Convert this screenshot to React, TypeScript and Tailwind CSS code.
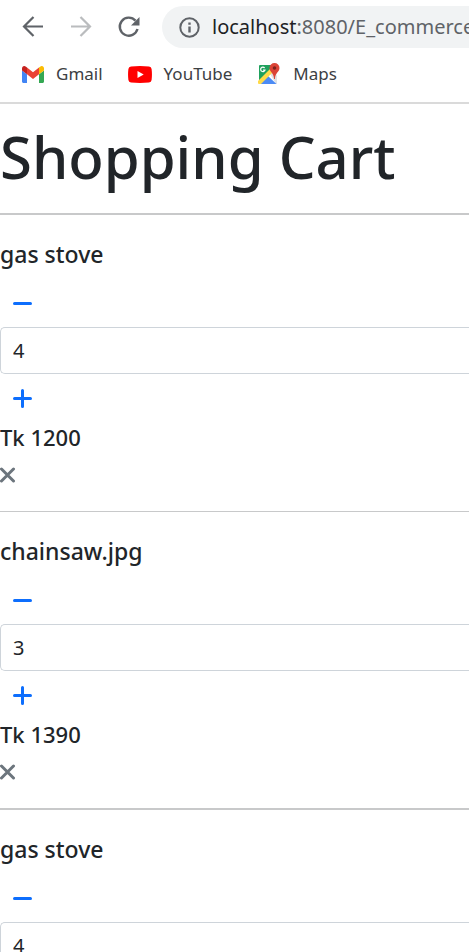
import React from "react";

type CartItem = { id: number; name: string; quantity: number; price: number; divider: string };

const items: CartItem[] = [
  { id: 1, name: "gas stove", quantity: 4, price: 1200, divider: "border-t-2" },
  { id: 2, name: "chainsaw.jpg", quantity: 3, price: 1390, divider: "border-t" },
  { id: 3, name: "gas stove", quantity: 4, price: 1200, divider: "border-t-2" },
];

function GmailIcon() {
  return (
    <svg width="22" height="17" viewBox="52 42 88 66" preserveAspectRatio="none" aria-hidden="true">
      <path fill="#4285f4" d="M58 108h14V74L52 59v43c0 3.32 2.69 6 6 6" />
      <path fill="#34a853" d="M120 108h14c3.32 0 6-2.69 6-6V59l-20 15" />
      <path fill="#fbbc04" d="M120 48v26l20-15v-8c0-7.42-8.47-11.65-14.4-7.2" />
      <path fill="#ea4335" d="M72 74V48l24 18 24-18v26L96 92" />
      <path fill="#c5221f" d="M52 51v8l20 15V48l-5.6-4.2c-5.94-4.45-14.4-.22-14.4 7.2" />
    </svg>
  );
}

function YouTubeIcon() {
  return (
    <svg width="24" height="17" viewBox="0 0 24 17" aria-hidden="true">
      <path fill="#f00" d="M3 .5Q12-.5 21 .5Q23.300.7 23.600 3Q24.300 8.500 23.600 14Q23.300 16.300 21 16.500Q12 17.400 3 16.500Q.7 16.300.4 14Q-.3 8.500.4 3Q.7.7 3 .5" />
      <path fill="#fff" d="M9.500 5v7l6.200-3.500z" />
    </svg>
  );
}

function MapsIcon() {
  return (
    <svg width="24" height="24" viewBox="0 0 24 24" aria-hidden="true">
      <path fill="#1fa15d" d="M3 3h16L2 20V4q0-1 1-1" />
      <path fill="#dfe2e5" d="M13 12l4-4 3 6v7q0 1-1 1z" />
      <path fill="#4c8bf5" d="M3 22L11 14l8.500 8z" />
      <path fill="#ffda48" d="M1 19L14 6l3 3L4 22H2q-1 0-1-1z" />
      <path fill="none" stroke="#fff" strokeWidth="1.200" d="M7.600 6A2.200 2.200 0 1 0 8 8H6" />
      <path fill="#db4437" d="M17.500 1a5 5 0 0 0-5 5c0 4 4.200 4.500 4.600 11h.8c.4-6.500 4.600-7 4.600-11a5 5 0 0 0-5-5" />
      <circle cx="17.500" cy="6" r="1.800" fill="#7b231e" />
    </svg>
  );
}

function Browser() {
  return (
    <header className="border-b-2 border-[#dadada] bg-white">
      <div className="flex items-center pt-[6px]">
        <nav className="flex w-[162px] shrink-0 items-center gap-6 pl-[21px]" aria-label="History">
          <button type="button" aria-label="Back" className="text-[#5f6368]">
            <svg width="24" height="24" viewBox="0 0 24 24" fill="none" stroke="currentColor" strokeWidth="2.200">
              <path d="M22 11.500H3M12.500 2L3 11.500l9.500 9.500" />
            </svg>
          </button>
          <button type="button" aria-label="Forward" className="text-[#babcbe]">
            <svg width="24" height="24" viewBox="0 0 24 24" fill="none" stroke="currentColor" strokeWidth="2.200">
              <path d="M2 11.500h19M11.500 2l9.500 9.500-9.500 9.500" />
            </svg>
          </button>
          <button type="button" aria-label="Reload" className="text-[#5f6368]">
            <svg width="24" height="24" viewBox="0 0 24 24" fill="none">
              <path d="M18.500 5.600A9 9 0 1 0 20.500 14" stroke="currentColor" strokeWidth="2.400" />
              <path d="M22.500 2v8.500H14z" fill="currentColor" />
            </svg>
          </button>
        </nav>
        <div className="flex h-[42px] min-w-0 flex-1 items-center gap-3 overflow-hidden rounded-l-full bg-[#f1f3f4] pl-[17px]">
          <svg className="shrink-0" width="21" height="21" viewBox="0 0 21 21" fill="none" stroke="#5f6368" strokeWidth="2" aria-hidden="true">
            <circle cx="10.500" cy="10.500" r="9.200" />
            <path d="M10.500 9.500V15.500M10.500 5.500v2.200" strokeWidth="2.400" />
          </svg>
          <span className="whitespace-nowrap text-[20px] leading-7 text-[#5f6368]">
            <span className="text-[#202124]">localhost</span>:8080/E_commerce
          </span>
        </div>
      </div>
      <nav className="flex h-[54px] items-center pb-[6px] text-[17px] leading-6 text-[#3c4043]" aria-label="Bookmarks">
        <a href="#gmail" className="flex items-center gap-3 pl-[22px] pt-1">
          <GmailIcon />
          Gmail
        </a>
        <a href="#youtube" className="flex items-center gap-3 pl-[25px] pt-1">
          <YouTubeIcon />
          YouTube
        </a>
        <a href="#maps" className="flex items-center gap-3 pl-[25px] pt-1">
          <MapsIcon />
          Maps
        </a>
      </nav>
    </header>
  );
}

function CartRow({ item }: { item: CartItem }) {
  return (
    <li className={`flex flex-col items-start border-[#c8c9ca] pt-[25px] pb-4 ${item.divider}`}>
      <h2 className="mb-[11px] text-[23px] font-medium leading-7">{item.name}</h2>
      <button type="button" aria-label={`Remove one ${item.name}`} className="h-12 px-3 text-[#0d6efd]">
        <svg width="21" height="21" viewBox="0 0 21 21" fill="none" stroke="currentColor" strokeWidth="3" strokeLinecap="round">
          <path d="M2.500 10.500h16" />
        </svg>
      </button>
      <input
        type="text"
        inputMode="numeric"
        aria-label={`Quantity of ${item.name}`}
        defaultValue={item.quantity}
        className="h-[47px] w-full rounded-l-[5px] border border-r-0 border-[#ced4da] bg-white px-3 text-[20px]"
      />
      <button type="button" aria-label={`Add one ${item.name}`} className="h-12 px-3 text-[#0d6efd]">
        <svg width="21" height="21" viewBox="0 0 21 21" fill="none" stroke="currentColor" strokeWidth="3" strokeLinecap="round">
          <path d="M2.500 10.500h16M10.500 2.500v16" />
        </svg>
      </button>
      <p className="mt-px text-[22px] font-medium leading-7">Tk {item.price}</p>
      <a href="#remove" aria-label={`Delete ${item.name}`} className="mt-1 flex h-10 items-center text-[#6c757d]">
        <svg width="16" height="16" viewBox="0 0 16 16" fill="none" stroke="currentColor" strokeWidth="3" strokeLinecap="round">
          <path d="M1.500 2l12 12M13.500 2l-12 12" />
        </svg>
      </a>
    </li>
  );
}

export default function App() {
  return (
    <div className="h-screen overflow-hidden bg-white font-['Noto_Sans',sans-serif] text-[#212529]">
      <Browser />
      <main>
        <h1 className="whitespace-nowrap pt-[17px] pb-5 text-[58px] font-medium leading-[72px]">Shopping Cart</h1>
        <ul>
          {items.map((item) => (
            <CartRow key={item.id} item={item} />
          ))}
        </ul>
      </main>
    </div>
  );
}
